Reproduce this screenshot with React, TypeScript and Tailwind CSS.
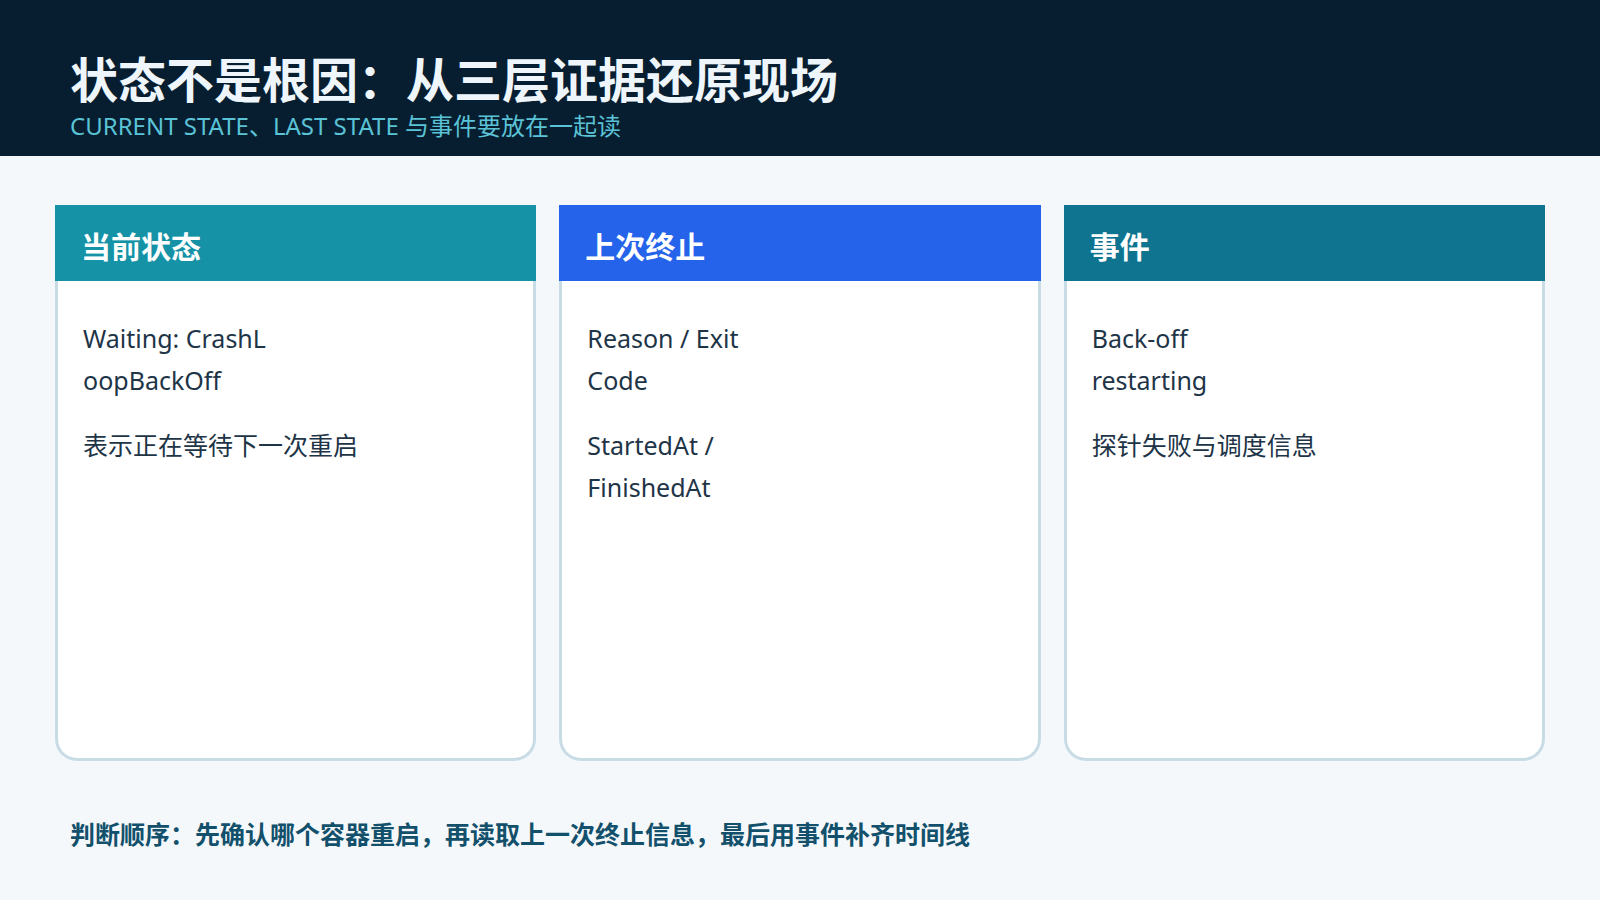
export default function App() {
  const cards = [
    { t: "当前状态", c: "bg-[#1592a6]", items: [["Waiting: CrashL", "oopBackOff"], ["表示正在等待下一次重启"]] },
    { t: "上次终止", c: "bg-[#2563eb]", items: [["Reason / Exit", "Code"], ["StartedAt /", "FinishedAt"]] },
    { t: "事件", c: "bg-[#0f7490]", items: [["Back-off", "restarting"], ["探针失败与调度信息"]] },
  ];
  const font = { fontFamily: '"Noto Sans", "Noto Sans CJK SC", sans-serif' };
  return (
    <div className="w-[1600px] h-[900px] bg-[#f4f8fb] flex flex-col" style={font}>
      <div className="h-[156px] bg-[#071e31] px-[70px] pt-[50px]">
        <div className="text-[48px] font-bold text-[#eef6fb] leading-[60px]">状态不是根因：从三层证据还原现场</div>
        <div className="text-[24px] text-[#5ac3d6] leading-[30px] mt-[1px]">CURRENT STATE、LAST STATE 与事件要放在一起读</div>
      </div>
      <div className="flex gap-[23px] px-[55px] mt-[49px]">
        {cards.map((k) => (
          <div key={k.t} className="flex-1 h-[556px] flex flex-col">
            <div className={`${k.c} h-[76px] flex items-center pt-[6px] px-[26px] text-white text-[30px] font-bold`}>{k.t}</div>
            <div className="flex-1 bg-white border-[3px] border-t-0 border-[#c8dce6] rounded-b-[22px] px-[25px] pt-[36px] text-[25px] text-[#1e3447] leading-[42px] flex flex-col gap-[23px]">
              {k.items.map((lines, i) => (
                <div key={i}>{lines.map((l) => <div key={l}>{l}</div>)}</div>
              ))}
            </div>
          </div>
        ))}
      </div>
      <div className="px-[70px] mt-[55px] text-[25px] font-bold text-[#12506b]">
        判断顺序：先确认哪个容器重启，再读取上一次终止信息，最后用事件补齐时间线
      </div>
    </div>
  );
}
